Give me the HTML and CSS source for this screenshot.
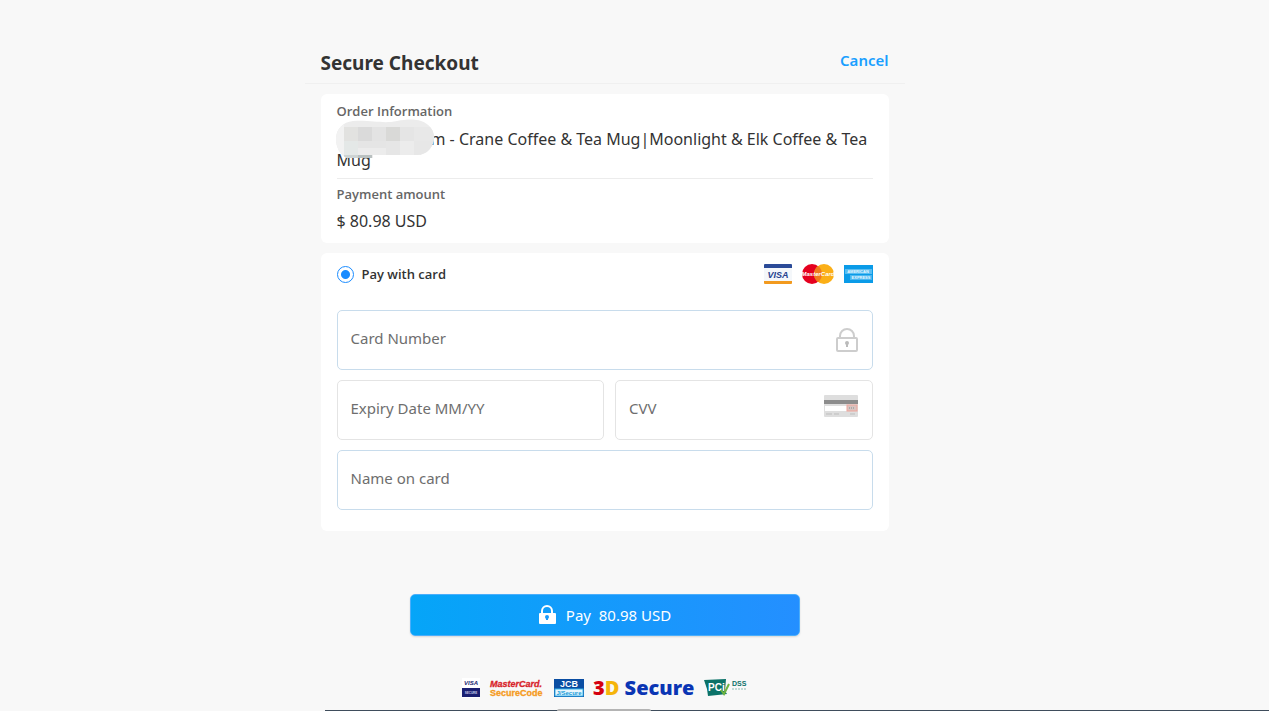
FILE: index.html
```html
<!DOCTYPE html>
<html lang="en">
<head>
<meta charset="utf-8">
<title>Secure Checkout</title>
<link rel="stylesheet" href="styles.css">
</head>
<body>
<main class="checkout">
  <header class="top">
    <h1 class="title">Secure Checkout</h1>
    <a class="cancel" href="#">Cancel</a>
  </header>

  <section class="card order">
    <h2 class="caption">Order Information</h2>
    <p class="value items">
      <svg class="redacted" width="100" height="40" viewBox="0 0 100 40" aria-hidden="true">
        <clipPath id="blob"><path d="M18 2C38 1 48 5 62 2C72 0 80 0 86 2C95 5 99 12 99 18C99 28 92 36 82 36H38V39H12C5 36 1 28 1 20C1 10 8 3 18 2Z"/></clipPath>
        <g clip-path="url(#blob)">
          <rect width="100" height="40" fill="#ececec"/>
          <rect width="9" height="40" fill="#f2f2f2"/>
          <rect x="9" y="8" width="14" height="14" fill="#e2e2e0"/>
          <rect x="23" y="8" width="14" height="14" fill="#dadada"/>
          <rect x="37" y="8" width="14" height="14" fill="#e3e3e3"/>
          <rect x="51" y="8" width="14" height="14" fill="#d9d9d7"/>
          <rect x="65" y="8" width="14" height="14" fill="#e5e5e5"/>
          <rect x="79" y="8" width="20" height="14" fill="#e8e8e8"/>
          <rect x="9" y="22" width="14" height="14" fill="#e4e8e7"/>
          <rect x="23" y="22" width="28" height="7" fill="#e5e5e5"/>
          <rect x="51" y="22" width="14" height="14" fill="#e6e6e6"/>
          <rect x="79" y="22" width="20" height="14" fill="#e7e7e7"/>
          <rect x="9" y="36" width="14" height="4" fill="#cdd3d3"/>
          <rect x="23" y="36" width="14" height="4" fill="#b9c0c0"/>
        </g>
      </svg>m - Crane Coffee &amp; Tea Mug|Moonlight &amp; Elk Coffee &amp; Tea Mug</p>
    <hr class="rule">
    <h2 class="caption">Payment amount</h2>
    <p class="value">$ 80.98 USD</p>
  </section>

  <form id="pay" class="card payment">
    <div class="method">
      <label class="choice"><input class="radio" type="radio" name="method" checked>Pay with card</label>
      <div class="brands">
        <svg width="30" height="20" viewBox="0 0 30 20" role="img" aria-label="Visa">
          <rect x="1" width="28" height="20" rx="1" fill="#f4f7fa"/>
          <path d="M1 4V1Q1 0 2 0H28Q29 0 29 1V4Z" fill="#2b4b98"/>
          <path d="M1 17H29V19Q29 20 28 20H2Q1 20 1 19Z" fill="#f29a1f"/>
          <text x="15" y="14" text-anchor="middle" class="logo-bold" font-size="9" font-style="italic" fill="#25418e">VISA</text>
        </svg>
        <svg width="34" height="20" viewBox="0 0 34 20" role="img" aria-label="MasterCard">
          <circle cx="11" cy="10" r="10" fill="#e5001f"/>
          <circle cx="23" cy="10" r="10" fill="#fbaf17"/>
          <path d="M17 2A10 10 0 0 1 17 18A10 10 0 0 1 17 2" fill="#f07a1c"/>
          <text x="17" y="12" text-anchor="middle" class="logo-bold" font-size="6" font-style="italic" fill="#fff">MasterCard</text>
        </svg>
        <svg width="30" height="20" viewBox="0 0 30 20" role="img" aria-label="American Express">
          <rect x="1" y="1" width="29" height="18" fill="#0a9be8"/>
          <rect x="2" y="5" width="27" height="5" fill="#58bdf2"/>
          <rect x="7" y="11" width="22" height="5" fill="#4ab6f0"/>
          <text x="15" y="9" text-anchor="middle" class="logo-bold" font-size="4" fill="#e6f6ff">AMERICAN</text>
          <text x="18" y="15" text-anchor="middle" class="logo-bold" font-size="4" fill="#e6f6ff">EXPRESS</text>
        </svg>
      </div>
    </div>

    <div class="fields">
      <label class="field active wide">
        <input class="entry" type="text" placeholder="Card Number" aria-label="Card Number">
        <svg width="22" height="24" viewBox="0 0 22 24" aria-hidden="true" fill="none" stroke="#cdcdcd" stroke-width="2">
          <path d="M4 10V8A7 7 0 0 1 18 8V10"/>
          <rect x="1" y="10" width="20" height="13" rx="1"/>
          <circle cx="11" cy="15" r="1" fill="#bbb" stroke="#bbb"/>
          <path d="M11 15V19" stroke="#bbb"/>
        </svg>
      </label>
      <label class="field">
        <input class="entry" type="text" placeholder="Expiry Date MM/YY" aria-label="Expiry Date MM/YY">
      </label>
      <label class="field">
        <input class="entry" type="text" placeholder="CVV" aria-label="CVV">
        <svg class="cvv-card" width="34" height="22" viewBox="0 0 34 22" aria-hidden="true">
          <rect width="34" height="22" rx="1" fill="#dedede"/>
          <rect y="5" width="34" height="4" fill="#8c8c8c"/>
          <rect x="1" y="11" width="22" height="5" fill="#fff"/>
          <rect x="23" y="10" width="10" height="6" fill="#d9c3c0" stroke="#f0a59b"/>
          <path d="M25 13H31" stroke="#aaa" stroke-width="2" stroke-dasharray="1 1"/>
          <path d="M2 19H8M10 19H15M26 19H31" stroke="#bdbdbd"/>
        </svg>
      </label>
      <label class="field active wide">
        <input class="entry" type="text" placeholder="Name on card" aria-label="Name on card">
      </label>
    </div>
  </form>

  <button class="pay" type="submit" form="pay">
    <svg width="18" height="20" viewBox="0 0 18 20" aria-hidden="true">
      <path d="M4 8V6A5 5 0 0 1 14 6V8" fill="none" stroke="#fff" stroke-width="2"/>
      <rect x="1" y="8" width="17" height="11" rx="1" fill="#fff"/>
      <path d="M9 15V12" stroke="#1a9bfb" stroke-width="2"/>
      <circle cx="9" cy="12" r="2" fill="#1a9bfb"/>
    </svg>
    <span>Pay &nbsp;80.98 USD</span>
  </button>

  <footer class="trust">
    <svg width="18" height="20" viewBox="0 0 18 20" role="img" aria-label="Visa Secure">
      <rect width="18" height="20" fill="#fff"/>
      <text x="9" y="7" text-anchor="middle" class="logo-bold" font-size="6" font-style="italic" fill="#1a1f71">VISA</text>
      <rect y="10" width="18" height="9" fill="#1a1f71"/>
      <text x="9" y="16" text-anchor="middle" class="logo-bold" font-size="3" fill="#c8caea">SECURE</text>
    </svg>
    <svg class="wordmark" width="54" height="20" viewBox="0 0 54 20" role="img" aria-label="MasterCard SecureCode">
      <text x="0" y="9" class="logo-bold" font-size="9" font-style="italic" fill="#d8232a" stroke="#d8232a" stroke-width=".3">MasterCard.</text>
      <text x="0" y="18" class="logo-bold" font-size="9" fill="#f59a1c" stroke="#f59a1c" stroke-width=".3">SecureCode</text>
    </svg>
    <svg width="30" height="20" viewBox="0 0 30 20" role="img" aria-label="JCB J/Secure">
      <rect y="1" width="30" height="18" fill="#0a4da2"/>
      <rect x="1" y="11" width="28" height="7" fill="#e8f6fd" stroke="#35b4ea"/>
      <text x="15" y="9" text-anchor="middle" class="logo-bold" font-size="9" fill="#fff">JCB</text>
      <text x="15" y="17" text-anchor="middle" class="logo-bold" font-size="6" fill="#149ad8">J/Secure</text>
    </svg>
    <svg class="wordmark" width="100" height="20" viewBox="0 0 100 20" role="img" aria-label="3D Secure">
      <text x="-1" y="17" class="logo-heavy" font-size="20"><tspan fill="#d4000f">3</tspan><tspan fill="#f5b40a">D</tspan><tspan fill="#0a35b4"> Secure</tspan></text>
    </svg>
    <svg width="44" height="20" viewBox="0 0 44 20" role="img" aria-label="PCI DSS">
      <path d="M0 2L22 1L21 13L23 16L4 18L3 11Z" fill="#0b7268"/>
      <text x="4" y="13" class="logo-bold" font-size="10" fill="#fff">PCi</text>
      <path d="M17 12L20 16L25 6" fill="none" stroke="#6db33f" stroke-width="2"/>
      <text x="28" y="8" class="logo-bold" font-size="7" fill="#0b7268">DSS</text>
      <path d="M28 11H42" stroke="#8dbcb4" stroke-dasharray="2 1"/>
    </svg>
  </footer>
</main>
<div class="dock"><span class="dock-handle"></span></div>
</body>
</html>
```
FILE: styles.css
```css
* { box-sizing: border-box; }

body {
  margin: 0;
  min-height: 100vh;
  padding-right: 60px;
  background: #f8f8f8;
  color: #333;
  font: 16px/21px "Noto Sans", "Open Sans", sans-serif;
}

.checkout {
  display: flex;
  flex-direction: column;
  max-width: 600px;
  margin: 0 auto;
  padding: 48px 0 12px;
}

.top {
  display: flex;
  justify-content: space-between;
  align-items: flex-start;
  padding: 0 16px 4px;
  border-bottom: 1px solid #f0f0f0;
}

.title {
  margin: 0;
  font-size: 19px;
  font-weight: 700;
  line-height: 31px;
}

.cancel {
  color: #1a9fff;
  font-weight: 600;
  font-size: 15px;
  line-height: 25px;
  text-decoration: none;
}

.card {
  margin: 10px 16px 0;
  padding: 0 16px;
  border-radius: 6px;
  background: #fff;
}

.order { padding: 7px 16px 11px; }

.caption {
  margin: 0;
  color: #666;
  font-family: "Open Sans", sans-serif;
  font-size: 13px;
  font-weight: 600;
  line-height: 20px;
}

.value {
  margin: 7px 0 0;
}

.items {
  position: relative;
  margin-top: 8px;
  text-indent: 94px;
}

.redacted {
  position: absolute;
  top: -10px;
  left: -2px;
}

.rule {
  margin: 7px 0 5px;
  border: 0;
  border-top: 1px solid #ececec;
}

.payment { padding-bottom: 21px; }

.method {
  display: flex;
  justify-content: space-between;
  align-items: center;
  height: 42px;
}

.choice {
  display: flex;
  align-items: center;
  gap: 8px;
  font-family: "Open Sans", sans-serif;
  font-size: 13px;
  font-weight: 600;
}

.radio {
  appearance: none;
  width: 17px;
  height: 17px;
  margin: 0;
  border: 1px solid #1a8cff;
  border-radius: 50%;
  background: radial-gradient(circle, #1a8cff 4px, #fff 5px);
}

.brands {
  display: flex;
  gap: 8px;
}

.fields {
  display: grid;
  grid-template-columns: minmax(0, 267fr) minmax(0, 257fr);
  gap: 10px 11px;
  padding-top: 15px;
}

.field {
  display: flex;
  align-items: center;
  height: 60px;
  padding: 0 14px 0 13px;
  border: 1px solid #e4e4e4;
  border-radius: 5px;
}

.active { border-color: #c8dcec; }

.wide { grid-column: 1 / -1; }

.entry {
  flex: 1;
  min-width: 0;
  padding: 0 0 4px;
  border: 0;
  outline: 0;
  background: none;
  color: #333;
  font: inherit;
  font-size: 15px;
}

.entry::placeholder {
  color: #6e6e6e;
  opacity: 1;
}

.cvv-card { margin-bottom: 8px; }

.pay {
  display: flex;
  align-self: center;
  justify-content: center;
  align-items: center;
  gap: 10px;
  width: 65%;
  height: 42px;
  margin-top: 63px;
  border: 1px solid #4aaefb;
  border-radius: 5px;
  background: linear-gradient(90deg, #05a5f8, #248fff);
  box-shadow: 0 1px 2px #0002;
  color: #fff;
  font: inherit;
  font-size: 15px;
}

.trust {
  display: flex;
  justify-content: center;
  align-items: center;
  gap: 10px;
  margin-top: 42px;
}

.wordmark { overflow: visible; }

.logo-bold { font-family: "Liberation Sans", Arial, sans-serif; font-weight: 700; }
.logo-heavy { font-family: "Open Sans", sans-serif; font-weight: 800; }

.dock {
  position: fixed;
  right: 0;
  bottom: 0;
  left: 325px;
  height: 1px;
  background: #3f4d5c;
}

.dock-handle {
  position: absolute;
  bottom: 0;
  left: 232px;
  width: 94px;
  height: 2px;
  border-radius: 2px 2px 0 0;
  background: #b4b4b4;
}
```
